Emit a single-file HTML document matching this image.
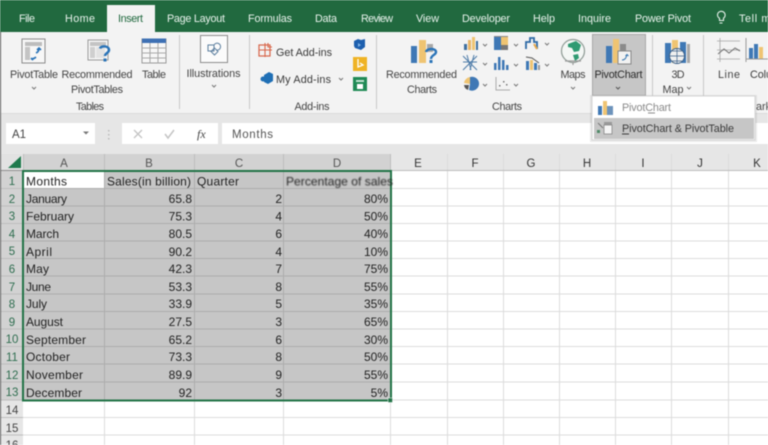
<!DOCTYPE html>
<html lang="en"><head><meta charset="utf-8"><title>Excel PivotChart</title>
<style>
html,body{margin:0;padding:0;width:768px;height:445px;overflow:hidden;background:#fff}
svg{display:block;filter:blur(.4px)}
text{font-family:"Liberation Sans",sans-serif;fill:#3a3a3a;font-size:10.8px}
.tab{fill:#e8f2ec;font-size:10.8px}
.rb{fill:#444;font-size:10.8px;text-anchor:middle}
.c{fill:#222;font-size:12px}
.r{fill:#222;font-size:12px;text-anchor:end}
.h{fill:#555;font-size:11.5px;text-anchor:middle}
.hs{fill:#2f6e50;font-size:11.5px;text-anchor:middle}
.ch{fill:none;stroke:#777;stroke-width:1}
</style></head><body>
<svg width="768" height="445" viewBox="0 0 768 445" xmlns="http://www.w3.org/2000/svg">
<rect width="768" height="445" fill="#fff"/>
<!-- title/tab bar -->
<rect width="768" height="32" fill="#21693f"/>
<rect x="107" y="5" width="48" height="28" fill="#f3f3f3"/>
<text class="tab" x="19" y="22" textLength="16">File</text>
<text class="tab" x="65" y="22" textLength="30">Home</text>
<text x="118" y="22" textLength="25" style="fill:#21693f">Insert</text>
<text class="tab" x="167" y="22" textLength="58">Page Layout</text>
<text class="tab" x="248" y="22" textLength="44">Formulas</text>
<text class="tab" x="315" y="22" textLength="22">Data</text>
<text class="tab" x="361" y="22" textLength="32">Review</text>
<text class="tab" x="416" y="22" textLength="23">View</text>
<text class="tab" x="462" y="22" textLength="48">Developer</text>
<text class="tab" x="533" y="22" textLength="22">Help</text>
<text class="tab" x="578" y="22" textLength="33">Inquire</text>
<text class="tab" x="635" y="22" textLength="56">Power Pivot</text>
<path d="M718 16a3.8 3.8 0 1 1 6 3.2v2.3h-4v-2.3a3.8 3.8 0 0 1-2-3.200zM720 24h3" fill="none" stroke="#e8f2ec" stroke-width="1.1" transform="translate(-.5 -1)"/>
<text class="tab" x="739" y="22" textLength="38">Tell me</text>
<!-- ribbon -->
<rect y="32" width="768" height="81" fill="#f3f3f3"/>
<rect y="113" width="768" height="41" fill="#e6e6e6"/>
<rect y="113" width="768" height="1" fill="#dcdcdc"/>
<g fill="#c9c9c9">
<rect x="179" y="35" width="1" height="74"/><rect x="249" y="35" width="1" height="74"/><rect x="376" y="35" width="1" height="74"/><rect x="652" y="35" width="1" height="74"/><rect x="703" y="35" width="1" height="74"/>
</g>
<!-- PivotTable icon -->
<rect x="22" y="39" width="23" height="24" fill="#f7f7f7" stroke="#8a8a8a"/>
<rect x="25" y="42" width="17" height="4" fill="#bdbdbd"/><rect x="25" y="47" width="5" height="13" fill="#c4c4c4"/>
<path d="M31 59c3 0 4-1 5-2M34 58l-2 2M31 58l2 2M39 48c0 3-1 4-3 5M37 50l2-2 2 2" fill="none" stroke="#2b74b8" stroke-width="1.600"/>
<!-- Recommended PivotTables icon -->
<rect x="88" y="40" width="20" height="20" fill="#f7f7f7" stroke="#9a9a9a"/>
<rect x="90" y="42" width="16" height="4" fill="#c4c4c4"/><rect x="90" y="47" width="5" height="11" fill="#cfcfcf"/><rect x="96" y="47" width="9" height="11" fill="#e3e3e3"/>
<path d="M100 48.500c1-3 9-3 9 1.500 0 3-4 3-4 6" fill="none" stroke="#2b74b8" stroke-width="2.500"/><rect x="103.500" y="58.500" width="3" height="3" fill="#2b74b8"/>
<!-- Table icon -->
<rect x="142" y="39" width="24" height="24" fill="#f7f7f7" stroke="#9a9a9a"/>
<rect x="142" y="38.500" width="24" height="4.500" fill="#3e70b4"/>
<path d="M142 48h24M142 53h24M142 58h24M150 43v20M158 43v20" stroke="#a8a8a8" stroke-width="1" fill="none"/>
<!-- Illustrations icon -->
<rect x="200.500" y="35.500" width="27" height="27" fill="#fbfbfb" stroke="#8c8c8c"/>
<path d="M208 45h6v6h-6zM214 45a3.500 3.500 0 1 1 2 5M214.500 48l3.500 3.500-3.500 3.500-3.500-3.500z" fill="none" stroke="#5d7f9f" stroke-width="1"/>
<!-- Labels -->
<text class="rb" x="34" y="78" textLength="48">PivotTable</text>
<path class="ch" d="M32 87l2 2 2-2M212 85l2 2 2-2"/>
<text class="rb" x="97" y="78" textLength="71">Recommended</text>
<text class="rb" x="97" y="93" textLength="52">PivotTables</text>
<text class="rb" x="154" y="78" textLength="24">Table</text>
<text class="rb" x="90" y="110" textLength="28">Tables</text>
<text class="rb" x="213.500" y="77" textLength="54">Illustrations</text>
<!-- Add-ins -->
<rect x="259" y="45" width="11" height="11" fill="none" stroke="#d8664a" stroke-width="1.200"/>
<path d="M265 43v14M259 50h13M268 43v4h4" fill="none" stroke="#d8664a" stroke-width="1.100"/>
<text x="276" y="56" textLength="56">Get Add-ins</text>
<path d="M264 75l5-3 4 2v7l-5 3-4-2z" fill="#1f6fb5"/><circle cx="263" cy="79" r="2.500" fill="#1f6fb5"/>
<text x="276" y="83" textLength="55">My Add-ins</text>
<path class="ch" d="M339 78l2 2 2-2"/>
<text class="rb" x="312" y="110" textLength="35">Add-ins</text>
<path d="M354 41l4-2 3 1 4-1v8l-4 3-3-1-3-1-1-2z" fill="#1d5fae"/><path d="M358 43l3 2-3 2z" fill="#7fb2e5"/>
<rect x="353" y="57" width="14" height="14" fill="#efb324"/><path d="M358 59v8l5-2-3-2" fill="none" stroke="#fff" stroke-width="1.300"/>
<rect x="353" y="77" width="14" height="14" fill="#1f8a55"/><rect x="356" y="80" width="8" height="2" fill="#bfe3cf"/><path d="M357 84h6v5h-6z" fill="#fff"/>
<!-- Recommended Charts -->
<rect x="411" y="46" width="6" height="17" fill="#3f78b5"/><rect x="419" y="40" width="7" height="23" fill="#efc472"/><rect x="427" y="44" width="6" height="8" fill="#a8a8a8"/>
<path d="M426 52c1-4 10-4 10 0 0 3-5 3-5 7" fill="none" stroke="#2b74b8" stroke-width="2.400"/><rect x="429.500" y="60" width="3" height="3" fill="#2b74b8"/>
<text class="rb" x="421.500" y="78" textLength="71">Recommended</text>
<text class="rb" x="422" y="93" textLength="30">Charts</text>
<text class="rb" x="507" y="110" textLength="30">Charts</text>
<!-- Small chart icons -->
<g>
<rect x="464" y="44" width="3" height="6" fill="#3f6f9f"/><rect x="468" y="40" width="3" height="10" fill="#e9b566"/><rect x="472" y="37" width="3" height="13" fill="#efc472"/><rect x="476" y="41" width="2" height="9" fill="#3f6f9f"/>
<path class="ch" d="M483 44l2 2 2-2M483 63l2 2 2-2M483 84l2 2 2-2M514 44l2 2 2-2M514 64l2 2 2-2M514 84l2 2 2-2M545 43l2 2 2-2M545 64l2 2 2-2"/>
<path d="M463 56l7 7 7-7M463 70l7-7 7 7M467 55l4 15M474 55l-4 15M463 62h14" fill="none" stroke="#4d7ba8" stroke-width="1"/>
<path d="M470 77a7 7 0 1 1-1 13l1-6z" fill="#3f78b5"/><path d="M464 83a7 7 0 0 1 6-6v7z" fill="#efc472"/><path d="M464 85h5l-1 5a6 6 0 0 1-4-5z" fill="#555"/>
<rect x="494" y="37" width="7" height="13" fill="#3f78b5"/><rect x="501" y="37" width="7" height="8" fill="#efc472"/><rect x="501" y="45" width="7" height="5" fill="#777"/><rect x="494" y="36" width="14" height="1" fill="#888"/>
<g fill="#3f78b5"><rect x="494" y="63" width="2.500" height="7"/><rect x="498" y="57" width="2.500" height="13"/><rect x="502" y="60" width="2.500" height="10"/><rect x="506" y="65" width="2.500" height="5"/></g>
<path d="M496 77v13h14" fill="none" stroke="#aaa"/><g fill="#777"><rect x="499" y="85" width="1.500" height="1.500"/><rect x="503" y="81" width="1.500" height="1.500"/><rect x="506" y="84" width="1.500" height="1.500"/></g>
<path d="M526 49v-7h4v-4h4v4h3v7" fill="none" stroke="#2f6aa6" stroke-width="1.800"/><path d="M534 44l3 5" stroke="#e9a94b" stroke-width="2"/>
<rect x="526" y="61" width="3" height="9" fill="#3f78b5"/><rect x="530" y="60" width="3" height="10" fill="#efc472"/><rect x="534" y="63" width="3" height="7" fill="#3f78b5"/><rect x="538" y="65" width="2" height="5" fill="#999"/><path d="M526 57l6 1 7 5" fill="none" stroke="#555"/>
</g>
<!-- Maps -->
<circle cx="573" cy="51" r="11.500" fill="#f4f7f5" stroke="#8d9a94" stroke-width="1.200"/>
<path d="M568 44l8-3 5 4-2 6-5 1-2-4-4-1zM573 55l5-1 1 4-4 3z" fill="#2f9a72"/>
<path d="M565 61h16M573 62v3" stroke="#9a9a9a" stroke-width="1.200"/>
<text class="rb" x="573" y="78" textLength="25">Maps</text>
<path class="ch" d="M571 87l2 2 2-2"/>
<!-- PivotChart button -->
<rect x="592.500" y="34.500" width="53" height="61" fill="#c6c6c6" stroke="#a8a8a8"/>
<rect x="606" y="46" width="6" height="17" fill="#3f78b5"/><rect x="613" y="39" width="6" height="24" fill="#efc472"/><rect x="620" y="44" width="6" height="8" fill="#8a8a8a"/>
<rect x="618" y="51" width="13" height="13" fill="#f2f2f2" stroke="#888"/><path d="M622 60c3 0 4-2 5-5M625.500 56l1.500-1.500 1.500 1.500" fill="none" stroke="#3a78b0"/>
<text class="rb" x="618.500" y="78" textLength="48" style="fill:#2b2b2b">PivotChart</text>
<path class="ch" d="M616 87l2 2 2-2" style="stroke:#555"/>
<!-- 3D Map -->
<rect x="665" y="43" width="6" height="20" fill="#3f78b5"/><rect x="672" y="40" width="6" height="23" fill="#efc472"/><rect x="680" y="42" width="6" height="21" fill="#3f78b5"/><rect x="687" y="44" width="3" height="19" fill="#a8a8a8"/>
<circle cx="677" cy="56" r="7.500" fill="#f0f0f0" stroke="#3a5f86"/><path d="M669.500 56h15M677 48.500v15M672 51h10M672 61h10" stroke="#3a5f86" stroke-width=".7" fill="none"/>
<text class="rb" x="678" y="78" textLength="13">3D</text>
<text class="rb" x="673" y="93" textLength="21">Map</text>
<path class="ch" d="M687 87l2 2 2-2"/>
<!-- Line / Column -->
<path d="M717 41h23M717 50h23M717 59h23M720 38v24" stroke="#a5a5a5" fill="none" stroke-width=".8"/>
<path d="M718 54l6-5 5 4 6-5 5 3" fill="none" stroke="#777" stroke-width="1.100"/>
<text class="rb" x="729" y="78" textLength="22">Line</text>
<rect x="749" y="48" width="4" height="11" fill="#3f78b5"/><rect x="754" y="44" width="4" height="15" fill="#3f78b5"/><rect x="759" y="47" width="4" height="12" fill="#efc472"/><path d="M746 38v24M746 59h22" stroke="#999" fill="none"/>
<text x="750" y="78" textLength="22">Colu</text>
<text x="756" y="110" style="fill:#444">ark</text>
<!-- formula bar -->
<rect x="6" y="123" width="89" height="21" fill="#fff"/>
<text x="12" y="138" textLength="14" style="font-size:11.5px;fill:#444">A1</text>
<path d="M83 131.500h6l-3 3z" fill="#777"/>
<g fill="#bbb"><rect x="108" y="130" width="1.500" height="1.500"/><rect x="108" y="134" width="1.500" height="1.500"/><rect x="108" y="138" width="1.500" height="1.500"/></g>
<rect x="122" y="123" width="96" height="21" fill="#fff"/>
<path d="M134 130l8 8M142 130l-8 8" stroke="#c4c4c4" stroke-width="1.300"/>
<path d="M165 134l3 4 6-8" stroke="#c4c4c4" stroke-width="1.500" fill="none"/>
<text x="197" y="138" style="font-family:'Liberation Serif',serif;font-style:italic;font-size:12px;fill:#444">fx</text>
<rect x="222" y="123" width="546" height="21" fill="#fff"/>
<text x="232" y="138" textLength="41" style="font-size:11.5px;fill:#555">Months</text>
<!-- grid -->
<rect x="0" y="154" width="768" height="17" fill="#e6e6e6"/>
<rect x="0" y="171" width="23" height="274" fill="#e6e6e6"/>
<rect x="0" y="154" width="391" height="17" fill="#d2d2d2"/>
<rect x="0" y="171" width="23" height="229" fill="#d2d2d2"/>
<rect x="0" y="154" width="23" height="17" fill="#e2e2e2"/>
<path d="M8 168l13-12v12z" fill="#1f7a4d"/>
<rect x="23" y="171" width="368" height="229" fill="#c6c6c6"/>
<rect x="24" y="172" width="80" height="16" fill="#fff"/>
<!-- gridlines -->
<g stroke="#dcdcdc" fill="none">
<path d="M391 188.500H768M391 206H768M391 223.500H768M391 241H768M391 258.500H768M391 276H768M391 294H768M391 311.500H768M391 329H768M391 346.500H768M391 364H768M391 382H768M391 400H768M23 417.500H768M23 435H768"/>
<path d="M104.500 400V445M194.500 400V445M283.500 400V445M390.500 400V445M447.500 154V445M503.500 154V445M559.500 154V445M615.500 154V445M671.500 154V445M728.500 154V445"/>
</g>
<g stroke="#adadad" fill="none">
<path d="M24 188.500H390M24 206H390M24 223.500H390M24 241H390M24 258.500H390M24 276H390M24 294H390M24 311.500H390M24 329H390M24 346.500H390M24 364H390M24 382H390"/>
<path d="M104.500 172V400M194.500 172V400M283.500 172V400"/>
</g>
<g stroke="#bdbdbd" fill="none">
<path d="M23.500 154V171M104.500 154V171M194.500 154V171M283.500 154V171M390.500 154V171"/>
<path d="M0 188.500H23M0 206H23M0 223.500H23M0 241H23M0 258.500H23M0 276H23M0 294H23M0 311.500H23M0 329H23M0 346.500H23M0 364H23M0 382H23M0 400H23M0 417.500H23M0 435H23"/>
</g>
<rect x="0" y="170" width="391" height="1" fill="#8f8f8f"/><rect x="391" y="170" width="377" height="1" fill="#bdbdbd"/>
<rect x="23" y="171" width="368" height="229.500" fill="none" stroke="#217346" stroke-width="2"/>
<rect x="388" y="398" width="4.500" height="4.500" fill="#217346" stroke="#fff" stroke-width=".5"/>
<!-- headers -->
<text class="h" x="64" y="167">A</text><text class="h" x="149" y="167">B</text><text class="h" x="239" y="167">C</text><text class="h" x="337" y="167">D</text>
<text class="h" x="418" y="167" style="fill:#333">E</text><text class="h" x="475" y="167" style="fill:#333">F</text><text class="h" x="531" y="167" style="fill:#333">G</text><text class="h" x="587" y="167" style="fill:#333">H</text><text class="h" x="643" y="167" style="fill:#333">I</text><text class="h" x="700" y="167" style="fill:#333">J</text><text class="h" x="757" y="167" style="fill:#333">K</text>
<text class="hs" x="12" y="185">1</text><text class="hs" x="12" y="203">2</text><text class="hs" x="12" y="220">3</text><text class="hs" x="12" y="238">4</text><text class="hs" x="12" y="255">5</text><text class="hs" x="12" y="273">6</text><text class="hs" x="12" y="291">7</text><text class="hs" x="12" y="308">8</text><text class="hs" x="12" y="326">9</text><text class="hs" x="12" y="343">10</text><text class="hs" x="12" y="361">11</text><text class="hs" x="12" y="379">12</text><text class="hs" x="12" y="396">13</text>
<text class="h" x="12" y="414" style="fill:#444">14</text><text class="h" x="12" y="432" style="fill:#444">15</text><text class="h" x="12" y="449" style="fill:#444">16</text>
<!-- column A -->
<text class="c" x="26" y="185.500" textLength="41">Months</text>
<text class="c" x="26" y="203" textLength="41">January</text>
<text class="c" x="26" y="220.500" textLength="48">February</text>
<text class="c" x="26" y="238" textLength="33">March</text>
<text class="c" x="26" y="256" textLength="26">April</text>
<text class="c" x="26" y="273" textLength="23">May</text>
<text class="c" x="26" y="291" textLength="25">June</text>
<text class="c" x="26" y="308" textLength="21">July</text>
<text class="c" x="26" y="326" textLength="37">August</text>
<text class="c" x="26" y="344" textLength="60">September</text>
<text class="c" x="26" y="361" textLength="44">October</text>
<text class="c" x="26" y="379" textLength="57">November</text>
<text class="c" x="26" y="397" textLength="56">December</text>
<!-- column B -->
<text class="c" x="107" y="185.500" textLength="84">Sales(in billion)</text>
<text class="r" x="192" y="203">65.8</text><text class="r" x="192" y="220.500">75.3</text><text class="r" x="192" y="238">80.5</text><text class="r" x="192" y="256">90.2</text><text class="r" x="192" y="273">42.3</text><text class="r" x="192" y="291">53.3</text><text class="r" x="192" y="308">33.9</text><text class="r" x="192" y="326">27.5</text><text class="r" x="192" y="344">65.2</text><text class="r" x="192" y="361">73.3</text><text class="r" x="192" y="379">89.9</text><text class="r" x="192" y="397">92</text>
<!-- column C -->
<text class="c" x="197" y="185.500" textLength="42">Quarter</text>
<text class="r" x="282" y="203">2</text><text class="r" x="282" y="220.500">4</text><text class="r" x="282" y="238">6</text><text class="r" x="282" y="256">4</text><text class="r" x="282" y="273">7</text><text class="r" x="282" y="291">8</text><text class="r" x="282" y="308">5</text><text class="r" x="282" y="326">3</text><text class="r" x="282" y="344">6</text><text class="r" x="282" y="361">8</text><text class="r" x="282" y="379">9</text><text class="r" x="282" y="397">3</text>
<!-- column D -->
<svg x="286" y="172" width="103" height="17"><text class="c" x="0" y="13.500" textLength="107">Percentage of sales</text></svg>
<text class="r" x="388" y="203">80%</text><text class="r" x="388" y="220.500">50%</text><text class="r" x="388" y="238">40%</text><text class="r" x="388" y="256">10%</text><text class="r" x="388" y="273">75%</text><text class="r" x="388" y="291">55%</text><text class="r" x="388" y="308">35%</text><text class="r" x="388" y="326">65%</text><text class="r" x="388" y="344">30%</text><text class="r" x="388" y="361">50%</text><text class="r" x="388" y="379">55%</text><text class="r" x="388" y="397">5%</text>
<!-- dropdown -->
<rect x="590" y="95" width="167" height="47" fill="#000" opacity=".08"/>
<rect x="592" y="96" width="163" height="44" fill="#fff" stroke="#d4d4d4" stroke-width="1"/>
<rect x="594" y="118" width="160" height="21" fill="#c6c6c6"/>
<rect x="598" y="106" width="4" height="9" fill="#3f78b5"/><rect x="603" y="101" width="4" height="14" fill="#efc472"/><rect x="607" y="106" width="6" height="9" fill="#6d93bb"/>
<path d="M598 123l5 5M612 124h-4" stroke="#777" fill="none"/><rect x="604" y="122" width="8" height="3" fill="#999"/><rect x="604" y="125" width="8" height="9" fill="#f5f5f5" stroke="#888" stroke-width=".8"/><rect x="597" y="130" width="3" height="3" fill="#4f8a68"/>
<text x="622" y="111" textLength="49" style="fill:#8a8a8a">PivotChart</text>
<path d="M648 113h7" stroke="#8a8a8a"/>
<text x="622" y="132" textLength="112" style="fill:#3a3a3a">PivotChart &amp; PivotTable</text>
<path d="M622 134h7" stroke="#3a3a3a"/>
<rect x="0" y="32" width="1" height="413" fill="#555"/>
</svg>
</body></html>
